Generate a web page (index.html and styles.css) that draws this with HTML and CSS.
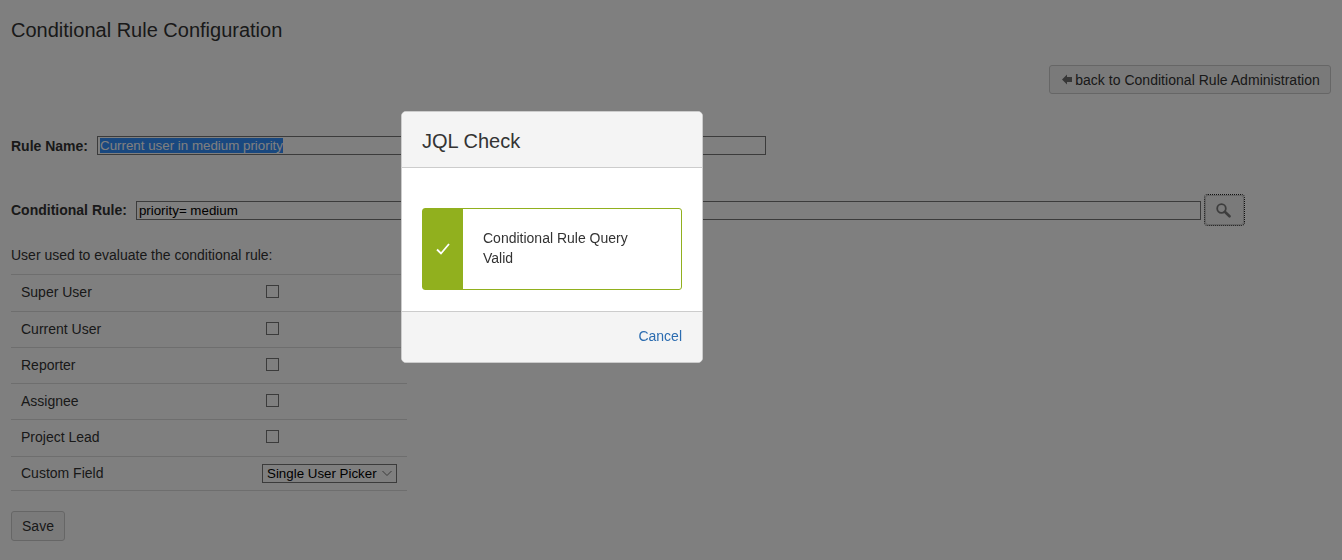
FILE: index.html
```html
<!DOCTYPE html>
<html>
<head>
<meta charset="utf-8">
<title>Conditional Rule Configuration</title>
<link rel="stylesheet" href="styles.css">
</head>
<body>
<div class="page">
  <h1 class="page-title">Conditional Rule Configuration</h1>
  <div class="toolbar">
    <a class="btn btn-back" href="#"><svg class="back-icon" width="10" height="11" viewBox="0 0 10 11"><path d="M0 5.500 5 .5V3H10V8H5V10.500z"/></svg>back to Conditional Rule Administration</a>
  </div>
  <div class="field field-name">
    <label class="field-label">Rule Name:</label>
    <input class="text-input name-input" type="text" value="Current user in medium priority">
  </div>
  <div class="field field-rule">
    <label class="field-label">Conditional Rule:</label>
    <input class="text-input rule-input" type="text" value="priority= medium">
    <button class="btn btn-search" type="button"><svg class="search-icon" width="16" height="16" viewBox="0 0 16 16"><circle cx="6.500" cy="6.500" r="4.300" fill="none" stroke="#7a7a7a" stroke-width="1.800"/><path d="M9.800 9.800 14.500 14.300" stroke="#7a7a7a" stroke-width="2.600" stroke-linecap="round"/></svg></button>
  </div>
  <p class="hint">User used to evaluate the conditional rule:</p>
  <table class="user-table">
    <tr class="row-tall"><td>Super User</td><td><input type="checkbox"></td></tr>
    <tr><td>Current User</td><td><input type="checkbox"></td></tr>
    <tr><td>Reporter</td><td><input type="checkbox"></td></tr>
    <tr><td>Assignee</td><td><input type="checkbox"></td></tr>
    <tr class="row-tall"><td>Project Lead</td><td><input type="checkbox"></td></tr>
    <tr class="row-select"><td>Custom Field</td><td>
      <div class="select-wrap">
        <select class="field-select"><option>Single User Picker</option></select>
        <svg class="select-arrow" width="10" height="7" viewBox="0 0 10 7"><path d="M.5 1 5 5.500 9.500 1" fill="none" stroke="#767676"/></svg>
      </div>
    </td></tr>
  </table>
  <button class="btn btn-save" type="button">Save</button>
</div>
<div class="modal">
  <div class="modal-frame">
    <div class="modal-header">JQL Check</div>
    <div class="modal-body">
      <div class="alert">
        <div class="alert-icon"><svg width="14" height="12" viewBox="0 0 14 12"><path d="M1 6.500 5 10.500 13 1" fill="none" stroke="#fff" stroke-width="1.800"/></svg></div>
        <div class="alert-text">Conditional Rule Query Valid</div>
      </div>
    </div>
    <div class="modal-footer"><a class="link-cancel" href="#">Cancel</a></div>
  </div>
</div>
<script>
document.querySelector('.name-input').select();
</script>
</body>
</html>
```

FILE: styles.css
```css
html, body {
  margin: 0;
  height: 100%;
}
body {
  background: #fff;
  color: #333;
  font-family: "Liberation Sans", Arial, sans-serif;
  font-size: 14px;
  overflow: hidden;
}
.page {
  padding: 0 11px;
}
.page-title {
  margin: 0;
  padding-top: 19px;
  font-size: 20px;
  font-weight: normal;
  line-height: 22px;
}
.toolbar {
  display: flex;
  justify-content: flex-end;
  margin-top: 24px;
}
.btn {
  box-sizing: border-box;
  display: inline-flex;
  align-items: center;
  justify-content: center;
  border: 1px solid #ccc;
  border-radius: 3px;
  background: #f5f5f5;
  color: #333;
  font: 14px "Liberation Sans", Arial, sans-serif;
  text-decoration: none;
}
.btn-back {
  width: 282px;
  height: 29px;
  padding-left: 2px;
  letter-spacing: 0.03px;
}
.back-icon {
  margin-right: 3px;
  fill: #6e6e6e;
}
.field {
  display: flex;
  align-items: center;
}
.field-name {
  margin-top: 42px;
}
.field-rule {
  margin-top: 40px;
}
.field-label {
  font-weight: bold;
  margin-right: 9px;
}
.text-input {
  box-sizing: border-box;
  height: 19px;
  border: 1px solid #767676;
  padding: 0 2px;
  font: 13.333px "Liberation Sans", Arial, sans-serif;
  color: #000;
  outline: none;
}
.text-input::selection {
  background: #3390ff;
  color: #fff;
}
.name-input {
  width: 669px;
}
.rule-input {
  width: 1065px;
}
.btn-search {
  width: 39px;
  height: 30px;
  margin-left: 4px;
  padding: 0;
  outline: 1px dotted #222;
}
.search-icon {
  margin: -1px 0 0 -3px;
}
.hint {
  margin: 20px 0 0;
  line-height: 20px;
}
.user-table {
  width: 396px;
  margin-top: 9px;
  border-collapse: collapse;
}
.user-table td {
  box-sizing: border-box;
  height: 36px;
  padding: 0 10px 1px;
  border-top: 1px solid #ddd;
  border-bottom: 1px solid #ddd;
}
.user-table td:first-child {
  width: 241px;
}
.user-table .row-tall td {
  height: 37px;
  padding-bottom: 2px;
}
.user-table input {
  display: block;
  appearance: none;
  box-sizing: border-box;
  width: 13px;
  height: 13px;
  margin: 0 0 2px 4px;
  border: 1px solid #767676;
  background: #fff;
}
.user-table .row-select td {
  height: 34px;
  padding-bottom: 0;
}
.user-table .row-select td:first-child {
  padding-bottom: 2px;
}
.select-wrap {
  position: relative;
  width: 135px;
}
.field-select {
  display: block;
  appearance: none;
  box-sizing: border-box;
  width: 135px;
  height: 19px;
  border: 1px solid #767676;
  border-radius: 0;
  background: #fff;
  padding: 0 0 0 4px;
  font: 13.333px "Liberation Sans", Arial, sans-serif;
  color: #000;
}
.select-arrow {
  position: absolute;
  top: 6px;
  right: 5px;
}
.btn-save {
  width: 54px;
  height: 30px;
  margin-top: 20px;
}
.modal {
  position: fixed;
  top: 0;
  right: 0;
  bottom: 0;
  left: 0;
  background: rgba(0, 0, 0, 0.5);
}
.modal-frame {
  position: absolute;
  left: 401px;
  top: 111px;
  box-sizing: border-box;
  width: 302px;
  height: 252px;
  display: flex;
  flex-direction: column;
  border: 1px solid #ccc;
  border-radius: 5px;
  background: #fff;
  overflow: hidden;
}
.modal-header {
  box-sizing: border-box;
  height: 56px;
  padding: 0 20px;
  border-bottom: 1px solid #ccc;
  background: #f4f4f4;
  font-size: 20px;
  line-height: 58px;
}
.modal-body {
  flex: 1;
  padding: 40px 20px 0;
}
.alert {
  box-sizing: border-box;
  display: flex;
  height: 82px;
  border: 1px solid #91b01e;
  border-radius: 3px;
}
.alert-icon {
  display: flex;
  flex: none;
  align-items: center;
  justify-content: center;
  width: 40px;
  background: #91b01e;
}
.alert-text {
  align-self: center;
  width: 170px;
  margin-top: -2px;
  padding-left: 20px;
  line-height: 20px;
}
.modal-footer {
  box-sizing: border-box;
  height: 51px;
  padding: 0 20px;
  border-top: 1px solid #ccc;
  background: #f4f4f4;
  text-align: right;
  line-height: 49px;
}
.link-cancel {
  color: #2b6cb0;
  text-decoration: none;
}
```
